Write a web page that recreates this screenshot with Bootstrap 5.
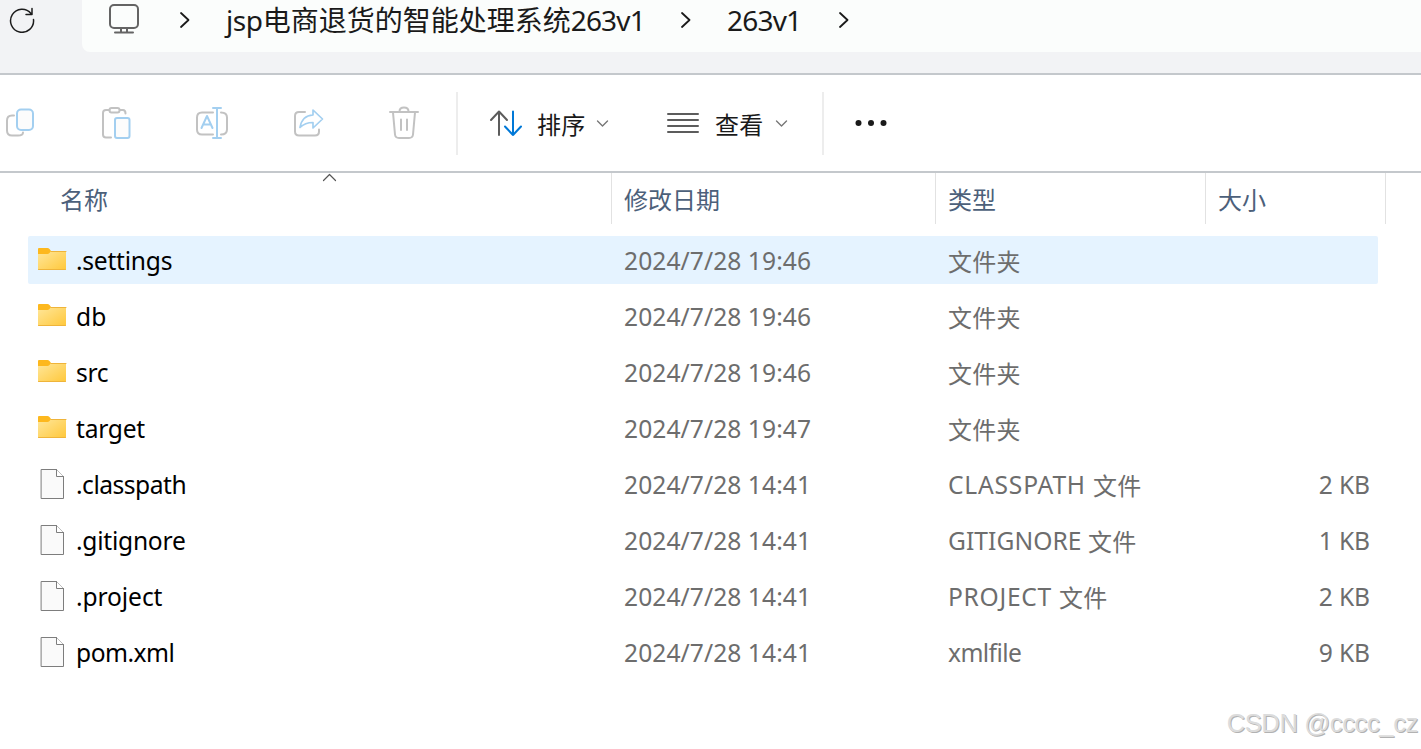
<!DOCTYPE html>
<html lang="zh-CN">
<head>
  <meta charset="UTF-8">
  <title>263v1</title>
  <meta name="viewport" content="width=device-width, initial-scale=1">
  <link href="https://cdn.jsdelivr.net/npm/bootstrap@5.3.0/dist/css/bootstrap.min.css" rel="stylesheet">
  <style>

    html, body {
      height: 100%;
      overflow: hidden;
    }

    body {
      font-family: "Noto Sans", "Noto Sans CJK SC", sans-serif;
      font-size: 24px;
      line-height: 32px;
      color: #000;
      background: #fff;
    }

    svg {
      display: block;
      flex: none;
      fill: none;
      stroke-linecap: round;
      stroke-linejoin: round;
    }

    /* address bar */
    .top-bar {
      height: 75px;
      background: #f2f3f5;
      border-bottom: 2px solid #c4c8cc;
    }

    .reload {
      width: 82px;
      padding: 7px 0 0 9px;
    }

    .address {
      height: 52px;
      padding-left: 25px;
      background: #fbfdfc;
      border-bottom-left-radius: 8px;
      font-size: 28px;
      color: #1a1a1a;
      white-space: nowrap;
    }

    .address svg {margin-top: 3px}

    .crumb {
      height: 40px;
      line-height: 40px;
      padding-left: 36px;
    }

    .crumb-long {width: 491px}
    .crumb-short {width: 148px}
    .tight {letter-spacing: -.8px}
    .tight-jsp {letter-spacing: -.4px}

    /* command bar */
    .commands {
      height: 98px;
      border-bottom: 2px solid #c4c8cc;
      color: #1a1a1a;
    }

    .commands span {
      width: 48px;
      padding-top: 3px;
      letter-spacing: .3px;
      white-space: nowrap;
    }

    .tool {width: 96px}

    .split {
      width: 2px;
      height: 63px;
      background: #ededed;
    }

    .g {stroke: #c2c2c2}
    .b {stroke: #a3cff0}

    /* column headings */
    .heads {
      height: 51px;
      color: #4c607a;
    }

    .heads > div {
      border-right: 1px solid #e2e2e2;
      padding: 11px 0 0 12px;
      position: relative;
    }

    .sort-mark {
      position: absolute;
      left: 322px;
      top: 0;
    }

    .col-name {width: 612px}
    .col-date {width: 324px}
    .col-type {width: 270px}
    .col-size {width: 180px}

    .heads .col-name {padding-left: 60px}

    /* file rows */
    .files {
      padding: 12px 0 0 28px;
      gap: 8px;
    }

    .file {
      width: 1350px;
      height: 48px;
      line-height: 50px;
      border-radius: 2px;
      color: #6d6d6d;
      font-size: 24.6px;
    }

    .file svg {margin: 9px 8px 0 1px}
    .file.active {background: #e5f3ff}
    .file .col-name {width: 596px; color: #000; padding-left: 9px}
    .file .col-date {letter-spacing: .07px}
    .file .col-size {width: 160px; text-align: right; padding-right: 8px; letter-spacing: -.1px}
    .file .han {font-size: 24px; letter-spacing: .2px; position: relative; top: 1px}

    .stamp {
      position: absolute;
      right: 3px;
      bottom: 8px;
      font: 25.5px/36px "Liberation Sans", sans-serif;
      letter-spacing: -.35px;
      color: #dcdcdc;
      text-shadow: 1px 1px 0 #b2b2b2;
    }

  </style>
</head>
<body>

<svg width="0" height="0" class="position-absolute">
  <linearGradient id="gold" x1="0" y1="0" x2="1" y2="1">
    <stop offset="0" stop-color="#ffe79b"/>
    <stop offset="1" stop-color="#ffc83c"/>
  </linearGradient>
  <symbol id="folder" viewBox="0 0 30 30">
    <path d="M0 4q0-1 1-1h8.500q1 0 2 1l1.500 2v4H0z" fill="#fdb81e"/>
    <path d="M0 9h9.500q1 0 2-1l1.500-2H28v18.500H0z" fill="url(#gold)"/>
    <path d="M13 6.500H28M.500 24.500H27.500" stroke="#efb43a"/>
  </symbol>
  <symbol id="page" viewBox="0 0 30 30">
    <path d="M3.500 .500H18.500L25.500 7.500V29.500H3.500z" fill="#fafafa" stroke="#7d7d7d"/>
    <path d="M18.500 .500V7.500H25.500" fill="#fff" stroke="#7d7d7d"/>
  </symbol>
</svg>

<div class="top-bar d-flex">
  <div class="reload">
    <svg width="26" height="26" stroke="#1c1c1c" stroke-width="1.500"><path d="M24.500 12.500A11.500 11.500 0 1 1 22 6.500M23 1.500V7.500H17"/></svg>
  </div>
  <div class="address d-flex flex-grow-1">
    <svg width="32" height="32" stroke="#646464" stroke-width="2"><rect x="3" y="2" width="28" height="23" rx="4"/><path d="M14 25v4M20 25v4M8 29.500H26"/></svg>
    <svg class="ms-4" width="27" height="32" viewBox="-17 0 27 32" stroke="#1a1a1a" stroke-width="1.800"><path d="M1 10l7.500 7L1 24"/></svg>
    <div class="crumb crumb-long"><span class="tight-jsp">jsp</span>电商退货的智能处理系统<span class="tight">263v1</span></div>
    <svg width="10" height="32" stroke="#1a1a1a" stroke-width="1.800"><path d="M1 10l7.500 7L1 24"/></svg>
    <div class="crumb crumb-short"><span class="tight">263v1</span></div>
    <svg width="10" height="32" stroke="#1a1a1a" stroke-width="1.800"><path d="M1 10l7.500 7L1 24"/></svg>
  </div>
</div>

<div class="commands d-flex align-items-center">
  <div class="tool">
    <svg width="40" height="36" stroke-width="2"><path class="g" d="M14 10.500h-2q-5 0-5 5v10q0 5 5 5h6q5 0 5-3"/><rect class="b" x="17" y="4.500" width="16" height="20.500" rx="4" fill="#fcfcfc"/></svg>
  </div>
  <div class="tool">
    <svg width="40" height="36" stroke-width="2"><path class="g" d="M13.500 5H10q-3 0-3 3v21.500q0 3 3 3h5M24 5h3q2.500 0 2.500 3.500"/><rect class="g" x="13.500" y="3" width="10" height="4.500" rx="2"/><rect class="b" x="19" y="13" width="14.500" height="20" rx="2" fill="#fcfcfc"/></svg>
  </div>
  <div class="tool">
    <svg width="42" height="36" stroke-width="2"><path class="g" d="M21 7.500H10q-5 0-5 5v12q0 5 5 5H21M29 7.500q6 0 6 5v12q0 5-6 5"/><path class="b" d="M21 3h8M25 3v30M21 33h8M9.500 23L15 11 20.500 23M11.500 19.500h7"/></svg>
  </div>
  <div class="tool">
    <svg width="42" height="36" stroke-width="2"><path class="g" d="M17 7h-6q-4 0-4 4v15.500q0 4 4 4h16q4 0 4-4v-2"/><path class="b" d="M25 5l9.500 9-9.500 9v-5.500q-8 0-13 5Q14 10.500 25 10z" stroke-width="1.700"/></svg>
  </div>
  <svg width="72" height="36" stroke-width="2"><path class="g" d="M6 7h28M15.500 6.500q0-4 4.500-4t4.500 4M9 7.500l2 22q.400 3.500 4 3.500h10q3.600 0 4-3.500L31 7.500M17 14.500v10.500M23 14.500v10.500"/></svg>
  <div class="split"></div>
  <svg width="79" height="36" stroke-width="2"><path stroke="#5c5c5c" d="M41 30V7M33 15l8-8.500L49 15"/><path stroke="#0078d7" d="M55 6.500V30M47 21.500l8 8.500 8-8.500"/></svg>
  <span>排序</span>
  <svg class="ms-2" width="20" height="20" stroke="#777" stroke-width="1.400"><path d="M4.500 8l5 5 5-5"/></svg>
  <svg width="102" height="36" stroke="#5c5c5c" stroke-width="2"><path d="M55 9h30M55 15h30M55 21h30M55 27h30"/></svg>
  <span>查看</span>
  <svg class="ms-2" width="51" height="20" stroke="#777" stroke-width="1.400"><path d="M5.500 8l5 5 5-5"/></svg>
  <div class="split"></div>
  <svg width="70" height="36"><g fill="#1a1a1a"><circle cx="34.500" cy="18" r="3"/><circle cx="47" cy="18" r="3"/><circle cx="59.500" cy="18" r="3"/></g></svg>
</div>

<div class="heads d-flex">
  <div class="col-name">名称
    <svg class="sort-mark" width="16" height="10" stroke="#555" stroke-width="1.200"><path d="M1.500 7.500l6-6 6 6"/></svg>
  </div>
  <div class="col-date">修改日期</div>
  <div class="col-type">类型</div>
  <div class="col-size">大小</div>
</div>

<div class="files d-flex flex-column" id="files"></div>

<div class="stamp">CSDN @cccc_cz</div>

<script src="https://cdn.jsdelivr.net/npm/bootstrap@5.3.0/dist/js/bootstrap.bundle.min.js"></script>
<script>
  // icon, name, date, type, chinese part, size, name tracking, type tracking
  const files = [
    ['folder', '.settings', '2024/7/28 19:46', '', '文件夹', '', -0.25, 0],
    ['folder', 'db', '2024/7/28 19:46', '', '文件夹', '', 0, 0],
    ['folder', 'src', '2024/7/28 19:46', '', '文件夹', '', -0.3, 0],
    ['folder', 'target', '2024/7/28 19:47', '', '文件夹', '', -0.25, 0],
    ['page', '.classpath', '2024/7/28 14:41', 'CLASSPATH ', '文件', '2 KB', -0.5, 0.8],
    ['page', '.gitignore', '2024/7/28 14:41', 'GITIGNORE ', '文件', '1 KB', -0.25, 0.05],
    ['page', '.project', '2024/7/28 14:41', 'PROJECT ', '文件', '2 KB', -0.1, 0.7],
    ['page', 'pom.xml', '2024/7/28 14:41', 'xmlfile', '', '9 KB', -0.5, -0.6]
  ];

  let output = "";
  for (let i = 0; i < files.length; i++) {
    const [icon, name, date, type, han, size, nameGap, typeGap] = files[i];
    output += `<div class="file d-flex ${i === 0 ? 'active' : ''}">
      <div class="col-name d-flex"><svg width="30" height="30"><use href="#${icon}"/></svg><span style="letter-spacing:${nameGap}px">${name}</span></div>
      <div class="col-date">${date}</div>
      <div class="col-type"><span style="letter-spacing:${typeGap}px">${type}</span><span class="han">${han}</span></div>
      <div class="col-size">${size}</div>
    </div>`;
  }
  document.getElementById('files').innerHTML = output;
</script>

</body>
</html>
